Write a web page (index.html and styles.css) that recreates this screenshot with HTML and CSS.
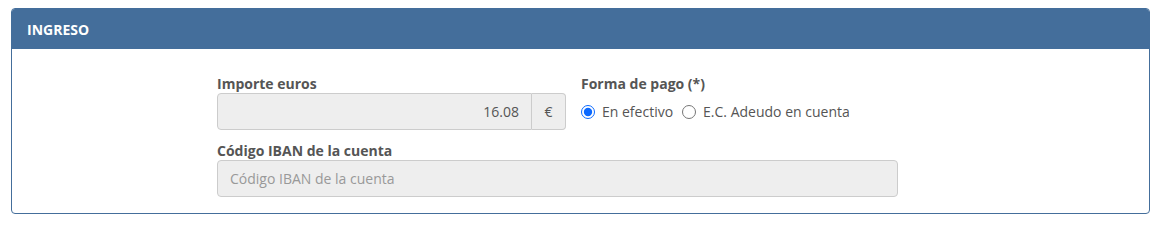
FILE: index.html
```html
<!DOCTYPE html>
<html lang="es">
<head>
<meta charset="utf-8">
<link rel="stylesheet" href="styles.css">
</head>
<body>
<div class="panel">
  <div class="panel-heading">INGRESO</div>
  <div class="panel-body">
    <div class="grid">
      <div class="field">
        <label class="lbl">Importe euros</label>
        <div class="input-group">
          <div class="control right">16.08</div>
          <div class="addon">€</div>
        </div>
      </div>
      <div class="field">
        <label class="lbl">Forma de pago (*)</label>
        <div class="radios">
          <label class="radio"><input type="radio" name="fp" checked> En efectivo</label>
          <label class="radio"><input type="radio" name="fp"> E.C. Adeudo en cuenta</label>
        </div>
      </div>
      <div class="field wide">
        <label class="lbl">Código IBAN de la cuenta</label>
        <div class="control placeholder">Código IBAN de la cuenta</div>
      </div>
    </div>
  </div>
</div>
</body>
</html>
```
FILE: styles.css
```css
html, body { margin: 0; padding: 0; background: #fff; }
body {
  padding: 8px 8px 0 11px;
  font-family: "Open Sans", "Liberation Sans", sans-serif;
  color: #555;
}
.panel {
  border: 1px solid #446e9b;
  border-radius: 4px;
  overflow: hidden;
}
.panel-heading {
  background: #446e9b;
  color: #fff;
  font-weight: 700;
  font-size: 14px;
  height: 40px;
  line-height: 41px;
  padding-left: 15px;
}
.panel-body {
  padding: 25px 0 16px 205px;
}
.grid {
  display: grid;
  grid-template-columns: 349px 317px;
  column-gap: 15px;
  row-gap: 11px;
}
.wide { grid-column: 1 / span 2; }
.field { display: flex; flex-direction: column; }
.lbl {
  font-weight: 700;
  font-size: 14px;
  line-height: 19px;
  color: #555;
  height: 19px;
}
.input-group { display: flex; height: 37px; }
.control {
  box-sizing: border-box;
  height: 37px;
  background: #eee;
  border: 1px solid #ccc;
  border-radius: 4px;
  font-size: 14px;
  line-height: 35px;
  padding: 0 12px;
  color: #555;
}
.input-group .control {
  flex: 1;
  border-radius: 4px 0 0 4px;
}
.right { text-align: right; }
.addon {
  box-sizing: border-box;
  width: 34px;
  height: 37px;
  background: #eee;
  border: 1px solid #ccc;
  border-left: 0;
  border-radius: 0 4px 4px 0;
  font-size: 14px;
  line-height: 35px;
  text-align: center;
  color: #555;
}
.placeholder { color: #999; }
.radios {
  display: flex;
  align-items: center;
  height: 37px;
  gap: 9px;
}
.radio {
  display: flex;
  align-items: center;
  font-size: 14px;
  color: #555;
}
.radio input {
  margin: 0 7px 0 0;
  width: 14px;
  height: 14px;
  accent-color: #0b69ff;
}
```
